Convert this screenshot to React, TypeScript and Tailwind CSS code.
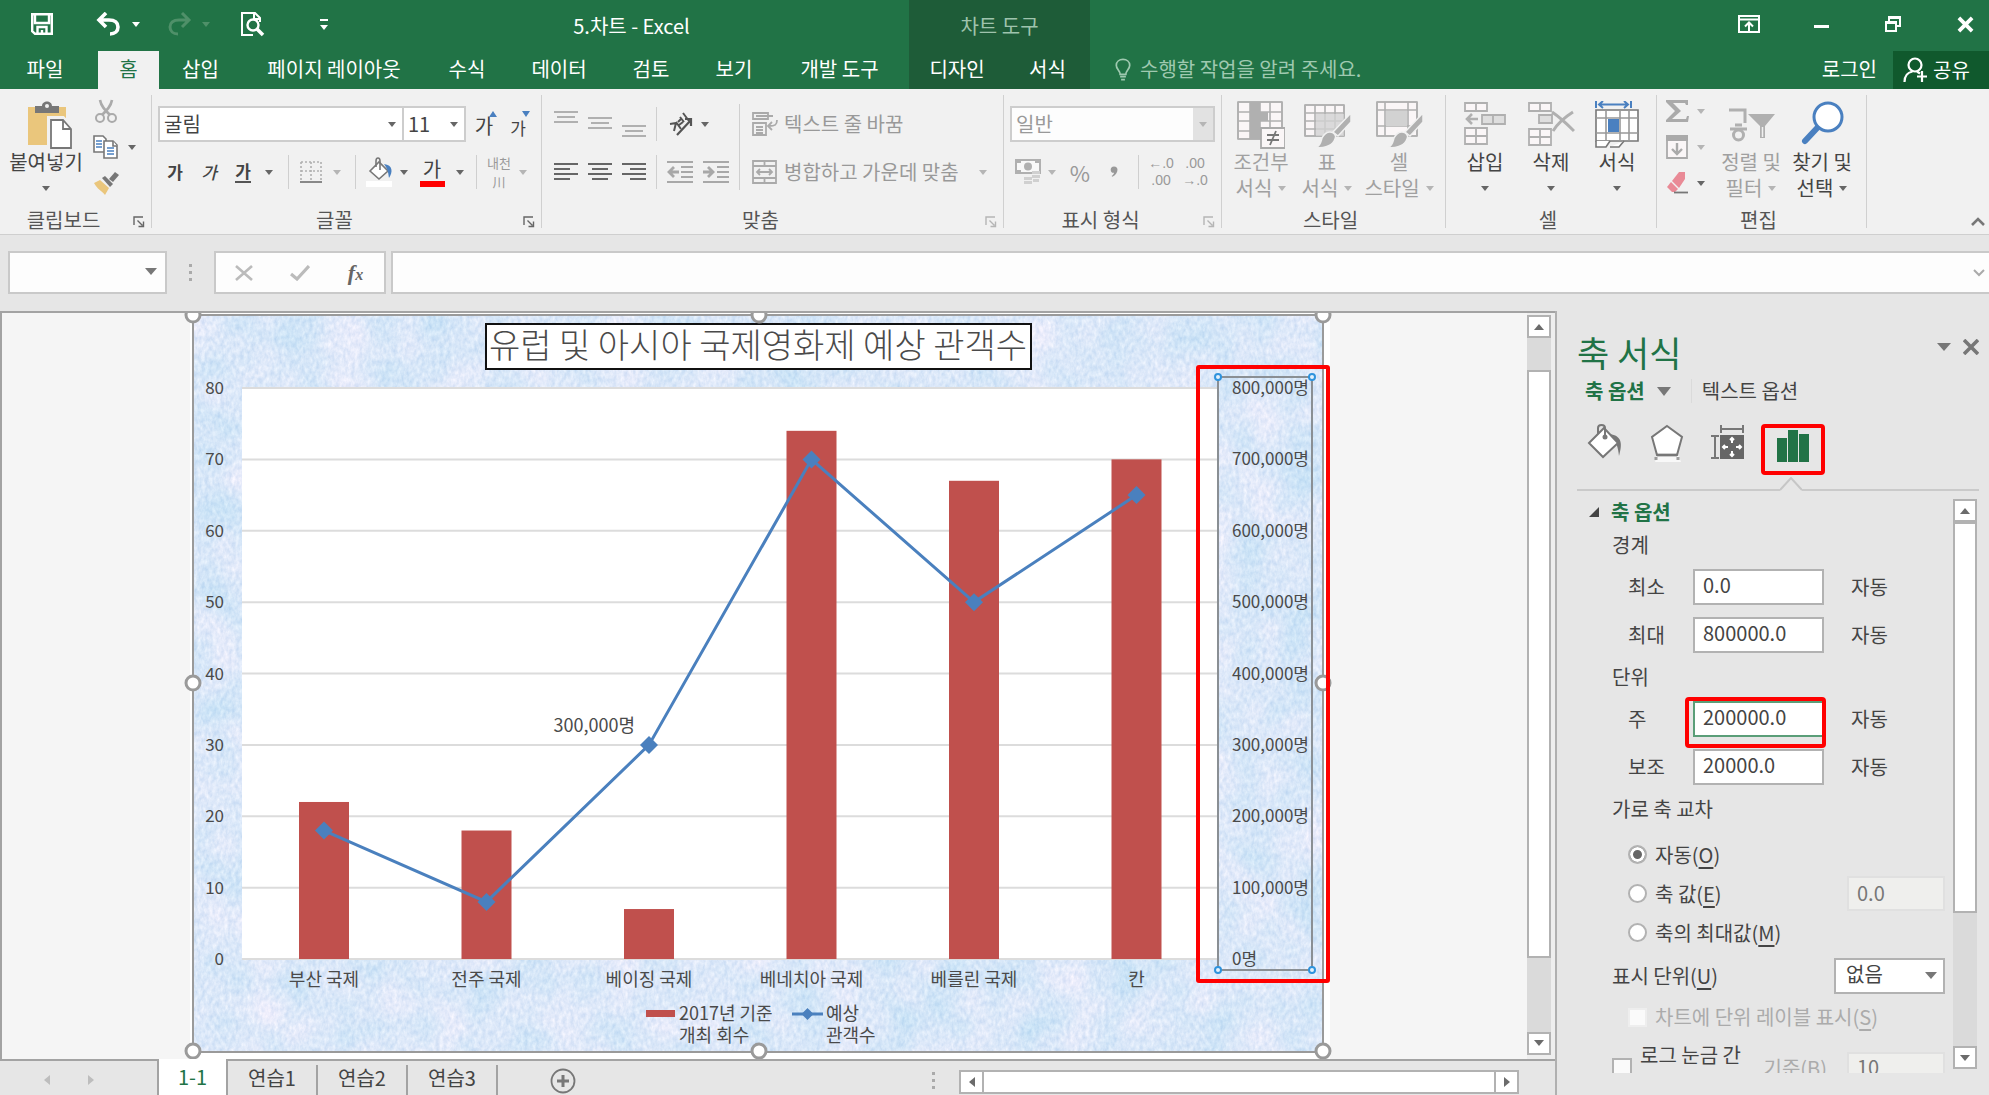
import { useState } from "react";
import type { ReactNode } from "react";

const tabs = [
  { label: "파일", className: "w-[98px] pr-2 text-white" },
  { label: "홈", className: "w-[61px] bg-[#f1f1f1] text-[#217346]" },
  { label: "삽입", className: "w-[83px] text-white" },
  { label: "페이지 레이아웃", className: "w-[184px] text-white" },
  { label: "수식", className: "w-[82px] text-white" },
  { label: "데이터", className: "w-[102px] text-white" },
  { label: "검토", className: "w-[82px] text-white" },
  { label: "보기", className: "w-[84px] text-white" },
  { label: "개발 도구", className: "w-[133px] pr-1.5 text-white" },
  { label: "디자인", className: "w-[96px] bg-[#1e5c38] text-white" },
  { label: "서식", className: "w-[85px] bg-[#1e5c38] text-white" },
];

const series = [
  { name: "부산 국제", count: 22, audience: 18 },
  { name: "전주 국제", count: 18, audience: 8 },
  { name: "베이징 국제", count: 7, audience: 30 },
  { name: "베네치아 국제", count: 74, audience: 70 },
  { name: "베를린 국제", count: 67, audience: 50 },
  { name: "칸", count: 70, audience: 65 },
];

const ticks = [0, 10, 20, 30, 40, 50, 60, 70, 80];

function Caret({ className = "text-[#666]" }: { className?: string }) {
  return (
    <svg viewBox="0 0 8 5" className={`h-[5px] w-2 shrink-0 ${className}`} aria-hidden="true">
      <path d="M0 0h8L4 5z" fill="currentColor" />
    </svg>
  );
}

function VLine({ className = "h-[34px]" }: { className?: string }) {
  return <span className={`w-px shrink-0 bg-[#cfcfcf] ${className}`} />;
}

function IconButton({ label, className = "", children }: { label: string; className?: string; children: ReactNode }) {
  return (
    <button type="button" aria-label={label} className={`flex shrink-0 items-center justify-center ${className}`}>
      {children}
    </button>
  );
}

function Launcher({ faded = false }: { faded?: boolean }) {
  return (
    <button type="button" aria-label="대화 상자 표시" className={faded ? "mr-1.5 text-[#b5b5b5]" : "mr-1.5 text-[#666]"}>
      <svg viewBox="0 0 12 12" className="mt-1 size-3" fill="none" stroke="currentColor" strokeWidth="1.4">
        <path d="M1 9V1h9M4.5 4.5l5 5M10.5 5.5v5h-5" />
      </svg>
    </button>
  );
}

type GroupProps = {
  label: string;
  className: string;
  launcher?: "on" | "off";
  children: ReactNode;
};

function Group({ label, className, launcher, children }: GroupProps) {
  return (
    <section aria-label={label} className={`flex shrink-0 ${className}`}>
      <div className="flex min-w-0 flex-1 flex-col">
        <div className="h-[117px]">{children}</div>
        <div className="flex h-[27px] items-center">
          <span className="flex-1 pr-1.5 text-center text-[#555]">{label}</span>
          {launcher ? <Launcher faded={launcher === "off"} /> : null}
        </div>
      </div>
      <span className="my-1.5 w-px bg-[#d0d0d0]" />
    </section>
  );
}

type BigButtonProps = {
  lines: [string, string?];
  className: string;
  muted?: boolean;
  children: ReactNode;
};

function BigButton({ lines, className, muted = false, children }: BigButtonProps) {
  return (
    <button
      type="button"
      className={`flex shrink-0 flex-col items-center whitespace-nowrap pt-3 leading-[26px] ${muted ? "text-[#a0a0a0]" : "text-[#444]"} ${className}`}
    >
      <span className="flex h-12 items-center">{children}</span>
      <span>{lines[0]}</span>
      <span className="flex h-[26px] items-center gap-1.5">
        {lines[1]}
        <Caret className={muted ? "text-[#b5b5b5]" : "text-[#666]"} />
      </span>
    </button>
  );
}

function Lines({ rows, muted = false }: { rows: [number, number, number][]; muted?: boolean }) {
  return (
    <svg viewBox="0 0 24 26" className="h-[26px] w-6" stroke={muted ? "#b0b0b0" : "#666"} strokeWidth="2">
      {rows.map(([x1, x2, y]) => (
        <path key={y} d={`M${x1} ${y}H${x2}`} />
      ))}
    </svg>
  );
}

function GridIcon({ cols, rows }: { cols: number[]; rows: number[] }) {
  const right = cols[cols.length - 1];
  const bottom = rows[rows.length - 1];
  return (
    <g fill="none" stroke="#b0b0b0" strokeWidth="1.6">
      <path d={`M${cols[0]} ${rows[0]}H${right}V${bottom}H${cols[0]}Z`} fill="#faf6f7" />
      <path d={cols.map((x) => `M${x} ${rows[0]}V${bottom}`).join("")} />
      <path d={rows.map((y) => `M${cols[0]} ${y}H${right}`).join("")} />
    </g>
  );
}

function BrushOverlay() {
  return (
    <g stroke="#f1f1f1" strokeWidth="1.5" fill="#b0b0b0">
      <path d="M48 12v9L35 35l-5-4z" />
      <path d="M27 31c4 0 7 4 5 7-2 6-9 9-19 9 5-3 5-7 6-10 2-4 4-6 8-6z" />
    </g>
  );
}

function TitleBar() {
  return (
    <div className="flex h-[51px]">
      <div className="flex w-[354px] shrink-0 items-start pl-7 pt-2">
        <IconButton label="저장" className="h-8 w-7">
          <svg viewBox="0 0 24 24" className="size-6" fill="none" stroke="#fff" strokeWidth="2.4">
            <path d="M2.2 2.2h19.6v19.6H5l-2.8-2.6zM5 3v8h14V3M7.500 21v-6h9v6M12 18v3" />
          </svg>
        </IconButton>
        <IconButton label="실행 취소" className="ml-9 h-8 w-8">
          <svg viewBox="0 0 26 24" className="h-6 w-[26px]" fill="none" stroke="#fff" strokeWidth="3.6">
            <path d="M11 1 4 8l7 7M4 8h10c6 0 9 3 9 7s-3 7-8 7" />
          </svg>
        </IconButton>
        <IconButton label="실행 취소 목록" className="h-8 w-6">
          <Caret className="text-white" />
        </IconButton>
        <IconButton label="다시 실행" className="ml-4 h-8 w-8">
          <svg viewBox="0 0 26 24" className="h-6 w-[26px]" fill="none" stroke="#4f9069" strokeWidth="3">
            <path d="m15 1 7 7-7 7M22 8H12c-6 0-9 3-9 7s3 7 8 7" />
          </svg>
        </IconButton>
        <IconButton label="다시 실행 목록" className="h-8 w-5">
          <Caret className="text-[#4f9069]" />
        </IconButton>
        <IconButton label="인쇄 미리 보기" className="ml-5 h-8 w-8">
          <svg viewBox="0 0 26 26" className="size-[26px]" fill="none" stroke="#fff" strokeWidth="2">
            <path d="M21 11V7l-5-5H3v22h11M15 2v6h6" />
            <circle cx="14" cy="14" r="5.500" strokeWidth="2.400" />
            <path d="m18 18 6 6" strokeWidth="3.600" />
          </svg>
        </IconButton>
        <IconButton label="빠른 실행 도구 모음 사용자 지정" className="ml-10 h-8 w-8 flex-col gap-1">
          <span className="h-0.5 w-2 bg-white" />
          <Caret className="text-white" />
        </IconButton>
      </div>
      <h1 className="flex w-[555px] shrink-0 items-center justify-center text-white">5.차트 - Excel</h1>
      <div className="flex w-[181px] shrink-0 items-center justify-center bg-[#1e5c38] text-[#9fc3ad]">차트 도구</div>
      <div className="flex flex-1 items-start justify-end gap-10 pr-2 pt-2">
        <IconButton label="리본 메뉴 표시 옵션" className="h-8 w-8">
          <svg viewBox="0 0 22 18" className="h-[18px] w-[22px]" fill="none" stroke="#fff" strokeWidth="2">
            <path d="M1 1h20v16H1zM1 4.500h20M11 16V8M7 11.500 11 7.500l4 4" />
          </svg>
        </IconButton>
        <IconButton label="최소화" className="h-8 w-8 pt-1">
          <span className="h-[3px] w-[15px] bg-white" />
        </IconButton>
        <IconButton label="이전 크기로 복원" className="h-8 w-8">
          <svg viewBox="0 0 18 18" className="size-[18px]" fill="none" stroke="#fff" strokeWidth="2">
            <path d="M5 6V2h11v9h-4M2 7h10v9H2zM2 8h10M5 3h11" />
          </svg>
        </IconButton>
        <IconButton label="닫기" className="h-8 w-8">
          <svg viewBox="0 0 18 18" className="size-[17px]" stroke="#fff" strokeWidth="4">
            <path d="m2 2 14 14M16 2 2 16" />
          </svg>
        </IconButton>
      </div>
    </div>
  );
}

function TabBar() {
  return (
    <nav className="flex h-[38px]">
      {tabs.map((tab) => (
        <button key={tab.label} type="button" className={`flex shrink-0 items-center justify-center whitespace-nowrap pb-0.5 ${tab.className}`}>
          {tab.label}
        </button>
      ))}
      <label className="flex flex-1 items-center pb-0.5 pl-6 text-[#9fc9b0]">
        <svg viewBox="0 0 18 24" className="h-[23px] w-[18px]" fill="none" stroke="currentColor" strokeWidth="1.800">
          <path d="M6 17c0-4-4-5-4-9.500C2 4 5 1.500 9 1.500S16 4 16 7.500c0 4.500-4 5.500-4 9.500zM6 19.500h6M7 22.500h4" />
        </svg>
        <input
          aria-label="수행할 작업"
          placeholder="수행할 작업을 알려 주세요."
          className="ml-2 w-64 bg-transparent outline-none placeholder:text-[#9fc9b0] placeholder:opacity-100"
        />
      </label>
      <button type="button" className="px-4 pb-0.5 text-white">
        로그인
      </button>
      <button type="button" className="flex w-24 items-center gap-1 bg-[#10592d] pl-2.5 text-white">
        <svg viewBox="0 0 26 26" className="h-[26px] w-[26px]" fill="none" stroke="currentColor" strokeWidth="2.200">
          <circle cx="12" cy="8" r="6.500" />
          <path d="M1.500 25c0-6 3-9.500 8-10.500M14 14.500l3 2M19 14v11M14 19.500h10" />
        </svg>
        공유
      </button>
    </nav>
  );
}

function ClipboardGroup() {
  return (
    <Group label="클립보드" className="w-[152px]" launcher="on">
      <div className="flex">
        <BigButton lines={["붙여넣기"]} className="w-[92px]">
          <svg viewBox="0 0 46 48" className="ml-2 h-12 w-[46px]">
            <path d="M1 6h38v38H1z" fill="#eac67c" />
            <path d="M8 12V5h7c0-6 10-6 10 0h7v7z" fill="#777" />
            <circle cx="20" cy="5" r="2" fill="#f1f1f1" />
            <path d="M22 17h14l9 9v21H22z" fill="#fff" stroke="#f1f1f1" strokeWidth="4" />
            <path d="M24 19h12l8 9v19H24zM36 19v9h8" fill="#fff" stroke="#777" strokeWidth="1.800" />
          </svg>
        </BigButton>
        <div className="flex flex-col gap-3 pt-2.5">
          <IconButton label="잘라내기" className="h-6 w-7">
            <svg viewBox="0 0 24 24" className="size-6" fill="none" stroke="#aaa" strokeWidth="2">
              <path d="M6 1c1 6 5 10 10 15M18 1c-1 6-5 10-10 15" strokeWidth="2.600" />
              <circle cx="6" cy="19" r="4" />
              <circle cx="18" cy="19" r="4" />
            </svg>
          </IconButton>
          <div className="flex items-center gap-1.5">
            <IconButton label="복사" className="h-6 w-7">
              <svg viewBox="0 0 26 24" className="h-6 w-[26px]" fill="#fff" stroke="#777" strokeWidth="1.600">
                <path d="M1 1h9l3 3v13H1z" />
                <path d="M11 6h9l4 4v13H11z" />
                <path d="M20 6v5h4" />
                <path d="M3 6h6M3 9h6M3 12h6M14 13h7M14 16h7M14 19h7" stroke="#4a80c0" />
              </svg>
            </IconButton>
            <IconButton label="복사 옵션" className="h-6 w-3">
              <Caret />
            </IconButton>
          </div>
          <IconButton label="서식 복사" className="h-6 w-7">
            <svg viewBox="0 0 26 24" className="h-6 w-[26px]">
              <path d="m1 12 6-3 9 8-4 7C9 20 4 18 1 12z" fill="#eac67c" />
              <path d="m9 7 3-2 8 8-3 3z" fill="#777" />
              <path d="m16 8 6-7 4 3-6 7z" fill="#777" />
            </svg>
          </IconButton>
        </div>
      </div>
    </Group>
  );
}

function FontGroup() {
  return (
    <Group label="글꼴" className="w-[390px]" launcher="on">
      <div className="flex flex-col gap-3 pl-1.5 pt-[17px] text-[#444]">
        <div className="flex h-9">
          <div className="relative">
            <select aria-label="글꼴" className="h-9 w-[246px] appearance-none border-2 border-[#cdcdcd] bg-white pl-1">
              <option>굴림</option>
            </select>
            <Caret className="pointer-events-none absolute right-2 top-4 text-[#666]" />
          </div>
          <div className="relative -ml-0.5">
            <select aria-label="글꼴 크기" className="h-9 w-16 appearance-none border-2 border-[#cdcdcd] bg-white pl-1">
              <option>11</option>
            </select>
            <Caret className="pointer-events-none absolute right-2 top-4 text-[#666]" />
          </div>
          <IconButton label="글꼴 크기 크게" className="ml-1.5 w-7">
            <span className="mt-1 text-[20px]">가</span>
            <svg viewBox="0 0 8 6" className="-ml-1 mb-5 h-1.5 w-2">
              <path d="M0 6h8L4 0z" fill="#4a80c0" />
            </svg>
          </IconButton>
          <IconButton label="글꼴 크기 작게" className="ml-1.5 w-7">
            <span className="mt-2 text-[17px]">가</span>
            <svg viewBox="0 0 8 6" className="-ml-1 mb-5 h-1.5 w-2">
              <path d="M0 0h8L4 6z" fill="#4a80c0" />
            </svg>
          </IconButton>
        </div>
        <div className="flex h-9 items-center text-[17px]">
          <IconButton label="굵게" className="w-[34px] font-bold">가</IconButton>
          <IconButton label="기울임꼴" className="w-[34px] font-medium italic">가</IconButton>
          <IconButton label="밑줄" className="w-[34px] font-bold">
            <span className="border-b-2 border-[#555] leading-5">가</span>
          </IconButton>
          <IconButton label="밑줄 옵션" className="w-[18px]">
            <Caret />
          </IconButton>
          <VLine className="ml-2.5 h-[34px]" />
          <IconButton label="테두리" className="ml-2 w-7">
            <svg viewBox="0 0 22 22" className="size-[22px]" fill="none" stroke="#b0b0b0" strokeWidth="1.600">
              <path d="M1 1h20v19M1 1v19M11 1v19M1 10h20" strokeDasharray="2 2" />
              <path d="M0 21h22" stroke="#888" strokeWidth="2" />
            </svg>
          </IconButton>
          <IconButton label="테두리 옵션" className="w-6">
            <Caret className="text-[#b5b5b5]" />
          </IconButton>
          <VLine className="ml-1.5 h-[34px]" />
          <IconButton label="채우기 색" className="ml-2 w-8">
            <svg viewBox="0 0 28 30" className="h-[30px] w-7">
              <path d="M4 14 13 5l9 9-9 8z" fill="#fff" stroke="#777" strokeWidth="1.600" />
              <path d="M10 10V4c0-4 4-4 4 0v9" fill="none" stroke="#777" strokeWidth="1.600" />
              <path d="M18 7c9 1 9 8 5 14-1-4 0-7-5-14z" fill="#4a80c0" />
              <path d="M0 24h26v6H0z" fill="#fff" />
            </svg>
          </IconButton>
          <IconButton label="채우기 색 옵션" className="w-4">
            <Caret />
          </IconButton>
          <IconButton label="글꼴 색" className="ml-1 w-8 flex-col">
            <span className="text-[20px] leading-6">가</span>
            <span className="h-1.5 w-[25px] bg-[#f00]" />
          </IconButton>
          <IconButton label="글꼴 색 옵션" className="ml-1 w-4">
            <Caret />
          </IconButton>
          <VLine className="ml-2 h-[34px]" />
          <IconButton label="윗주 필드" className="ml-2.5 flex-col text-[13px] leading-[19px] text-[#999]">
            <span>내천</span>
            <span>川</span>
          </IconButton>
          <IconButton label="윗주 옵션" className="w-6">
            <Caret className="text-[#b5b5b5]" />
          </IconButton>
        </div>
      </div>
    </Group>
  );
}

function AlignGroup() {
  return (
    <Group label="맞춤" className="w-[462px]" launcher="off">
      <div className="flex pt-[15px]">
        <div className="flex flex-col gap-3 pl-3 pt-0.5">
          <div className="flex h-9 items-center gap-2.5">
            <IconButton label="위쪽 맞춤"><Lines muted rows={[[0, 24, 1], [3, 21, 6], [0, 24, 11]]} /></IconButton>
            <IconButton label="가운데 맞춤"><Lines muted rows={[[0, 24, 7], [3, 21, 12], [0, 24, 17]]} /></IconButton>
            <IconButton label="아래쪽 맞춤"><Lines muted rows={[[0, 24, 15], [3, 21, 20], [0, 24, 25]]} /></IconButton>
            <VLine />
            <IconButton label="방향">
              <svg viewBox="0 0 28 26" className="h-[26px] w-7" fill="none" stroke="#555" strokeWidth="2.200">
                <path d="m10 24 14-15M24 15V8h-6" />
                <path d="m3 13 6-1-2 8M9 11l5 7M12 14l4-3M13 6l4 5M16 2l6 8M14 8l-3 3" strokeWidth="2" />
              </svg>
            </IconButton>
            <Caret className="-ml-1 text-[#666]" />
          </div>
          <div className="flex h-9 items-center gap-2.5">
            <IconButton label="왼쪽 맞춤"><Lines rows={[[0, 24, 5], [0, 16, 10], [0, 24, 15], [0, 16, 20]]} /></IconButton>
            <IconButton label="가운데"><Lines rows={[[0, 24, 5], [4, 20, 10], [0, 24, 15], [4, 20, 20]]} /></IconButton>
            <IconButton label="오른쪽 맞춤"><Lines rows={[[0, 24, 5], [8, 24, 10], [0, 24, 15], [8, 24, 20]]} /></IconButton>
            <VLine />
            <IconButton label="내어쓰기">
              <svg viewBox="0 0 26 24" className="h-6 w-[26px]" fill="none" stroke="#a8a8a8" strokeWidth="2">
                <path d="M0 2h26M14 7h12M14 12h12M14 17h12M0 22h26" />
                <path d="M12 12H2M7 7l-5 5 5 5" strokeWidth="2.800" />
              </svg>
            </IconButton>
            <IconButton label="들여쓰기">
              <svg viewBox="0 0 26 24" className="h-6 w-[26px]" fill="none" stroke="#a8a8a8" strokeWidth="2">
                <path d="M0 2h26M14 7h12M14 12h12M14 17h12M0 22h26" />
                <path d="M0 12h10M5 7l5 5-5 5" strokeWidth="2.800" />
              </svg>
            </IconButton>
          </div>
        </div>
        <VLine className="ml-2.5 h-[86px]" />
        <div className="flex flex-col gap-3 pl-3 pt-0.5 text-[#999]">
          <button type="button" className="flex h-9 items-center gap-1.5 whitespace-nowrap">
            <svg viewBox="0 0 26 24" className="h-6 w-[26px]" fill="none" stroke="#aaa" strokeWidth="1.800">
              <path d="M1 1h15v6H1zM1 11h13v12H1zM4 4h17M4 15h7M4 18h7M4 21h7M25 8c0 5-2 6-8 6M20 10l-4 4 4 4" />
            </svg>
            텍스트 줄 바꿈
          </button>
          <button type="button" className="flex h-9 items-center whitespace-nowrap">
            <svg viewBox="0 0 26 24" className="mr-1.5 h-6 w-[26px]" fill="none" stroke="#aaa" strokeWidth="1.800">
              <path d="M1 1h23v22H1zM1 6h23M1 18h23M12.500 1v5M12.500 18v5M5 12h15M8 9l-3 3 3 3M17 9l3 3-3 3" />
            </svg>
            병합하고 가운데 맞춤
            <Caret className="ml-5 text-[#b5b5b5]" />
          </button>
        </div>
      </div>
    </Group>
  );
}

function NumberGroup() {
  return (
    <Group label="표시 형식" className="w-[218px]" launcher="off">
      <div className="flex flex-col gap-3 px-1.5 pt-[17px] text-[#999]">
        <div className="relative h-9">
          <select aria-label="표시 형식" className="size-full appearance-none border-2 border-[#cdcdcd] bg-[#fdfdfd] pl-1">
            <option>일반</option>
          </select>
          <span className="pointer-events-none absolute inset-y-0.5 right-0.5 flex w-5 items-center justify-center bg-[#e2e2e2]">
            <Caret className="text-[#b5b5b5]" />
          </span>
        </div>
        <div className="flex h-9 items-center">
          <IconButton label="회계 표시 형식" className="ml-1 w-7">
            <svg viewBox="0 0 26 26" className="size-[26px]">
              <path d="M1 1h24v13H1z" fill="#f8f8f8" stroke="#b0b0b0" strokeWidth="2" />
              <circle cx="13" cy="7.500" r="4" fill="#b0b0b0" />
              <path d="M0 0h6v4H0zM20 0h6v4h-6zM0 11h6v4H0z" fill="#b0b0b0" />
              <path d="M17 12h8v3h-8zM17 16h8v3h-8zM9 18h8v3H9zM9 22h8v3H9zM18 20h6v3h-6z" fill="#d0d0d0" />
            </svg>
          </IconButton>
          <IconButton label="회계 옵션" className="w-5">
            <Caret className="text-[#b5b5b5]" />
          </IconButton>
          <IconButton label="백분율 스타일" className="w-9 text-[22px]">%</IconButton>
          <IconButton label="쉼표 스타일" className="w-8">
            <svg viewBox="0 0 10 14" className="h-3 w-2">
              <path d="M5 0c7 0 5 10-2 13l-1-1c2-1 3-3 3-4-5 1-6-8 0-8z" fill="#999" />
            </svg>
          </IconButton>
          <VLine className="ml-2 h-[34px]" />
          <IconButton label="자릿수 늘림" className="ml-2 w-7 flex-col font-['Liberation_Sans',sans-serif] text-[14px] leading-[17px]">
            <span>←.0</span>
            <span>.00</span>
          </IconButton>
          <IconButton label="자릿수 줄임" className="ml-1.5 w-7 flex-col font-['Liberation_Sans',sans-serif] text-[14px] leading-[17px]">
            <span>.00</span>
            <span>→.0</span>
          </IconButton>
        </div>
      </div>
    </Group>
  );
}

function StyleGroup() {
  return (
    <Group label="스타일" className="w-[224px]">
      <div className="flex pl-1.5">
        <BigButton lines={["조건부", "서식"]} className="w-[66px]" muted>
          <svg viewBox="0 0 48 48" className="size-12">
            <GridIcon cols={[1, 13, 23, 33, 45]} rows={[1, 11, 20, 30, 38]} />
            <path d="M13 1h10v37H13zM23 11h8v9h-8z" fill="#b0b0b0" />
            <path d="M24 27h24v20H24z" fill="#faf6f7" stroke="#aaa" strokeWidth="1.800" />
            <path d="M30 34h12M30 39h12M39 30l-6 14" stroke="#777" strokeWidth="1.800" />
          </svg>
        </BigButton>
        <BigButton lines={["표", "서식"]} className="w-[66px]" muted>
          <svg viewBox="0 0 48 48" className="size-12">
            <GridIcon cols={[2, 12, 22, 32, 41]} rows={[4, 12, 20, 28, 35]} />
            <path d="M13 13h28v22H13z" fill="#d2d2d2" fillOpacity="0.800" />
            <BrushOverlay />
          </svg>
        </BigButton>
        <BigButton lines={["셀", "스타일"]} className="w-[78px]" muted>
          <svg viewBox="0 0 48 48" className="size-12">
            <GridIcon cols={[2, 10, 33, 42]} rows={[1, 9, 25, 35]} />
            <path d="M11 10h21v15H11z" fill="#d2d2d2" />
            <BrushOverlay />
          </svg>
        </BigButton>
      </div>
    </Group>
  );
}

function CellGroup() {
  return (
    <Group label="셀" className="w-[211px]">
      <div className="flex pl-1.5">
        <BigButton lines={["삽입"]} className="w-[66px]">
          <svg viewBox="0 0 48 48" className="size-12" fill="#faf6f7" stroke="#b0b0b0" strokeWidth="1.800">
            <path d="M4 2h22v8H4zM15 2v8M4 27h22v16H4zM15 27v16M4 35h22" />
            <path d="M21 14h23v9H21zM32 14v9" fill="#dedede" />
            <path d="M17 18H6M11 13l-5 5 5 5" fill="none" strokeWidth="2.600" />
          </svg>
        </BigButton>
        <BigButton lines={["삭제"]} className="w-[66px]">
          <svg viewBox="0 0 48 48" className="size-12" fill="#faf6f7" stroke="#b0b0b0" strokeWidth="1.800">
            <path d="M2 2h22v8H2zM13 2v8M2 28h22v16H2zM13 28v16M2 36h22" />
            <path d="M12 14h13v8H12z" fill="#dedede" />
            <path d="M25 11c6 4 13 10 22 19M46 11C38 16 31 22 26 30" fill="none" strokeWidth="3" />
          </svg>
        </BigButton>
        <BigButton lines={["서식"]} className="w-[66px]">
          <svg viewBox="0 0 46 48" className="h-12 w-[46px]" fill="#fff" stroke="#777" strokeWidth="1.600">
            <path d="M2 9h42v31H2z" />
            <path d="M2 17h42M2 32h42M12 9v31M26 9v31M35 9v31" stroke="#999" />
            <path d="M14 18h11v13H14z" fill="#4a80c0" stroke="none" />
            <path d="M2 40v6h10l4-6M16 46h9l5-6" />
            <path d="M2 0v7M37 0v7M5 3.500h29M9 0 5 3.500 9 7M30 0l4 3.500L30 7" fill="none" stroke="#4a80c0" strokeWidth="2" />
          </svg>
        </BigButton>
      </div>
    </Group>
  );
}

function EditGroup() {
  return (
    <Group label="편집" className="w-[210px]">
      <div className="flex pl-2">
        <div className="flex w-12 shrink-0 flex-col gap-3 pt-2.5">
          <button type="button" aria-label="합계" className="flex h-6 items-center gap-2">
            <svg viewBox="0 0 24 24" className="size-6">
              <path d="M1 1h22v5h-2l-1-2H8l8 8-9 8h14l1-3h2l-1 6H1v-2l9-9-9-9z" fill="#aaa" />
            </svg>
            <Caret className="text-[#b5b5b5]" />
          </button>
          <button type="button" aria-label="채우기" className="flex h-6 items-center gap-2">
            <svg viewBox="0 0 24 24" className="size-6" fill="#faf6f7" stroke="#aaa" strokeWidth="1.800">
              <path d="M2 1h20v22H2z" />
              <path d="M2 1h20v4H2z" fill="#aaa" />
              <path d="M12 8v11M7 14l5 5 5-5" fill="none" strokeWidth="2.400" />
            </svg>
            <Caret className="text-[#b5b5b5]" />
          </button>
          <button type="button" aria-label="지우기" className="flex h-6 items-center gap-2">
            <svg viewBox="0 0 24 24" className="size-6">
              <path d="M14 1h6v7l-6 9-7-7z" fill="#e98a96" />
              <path d="m6 11 7 7-3 3H7l-5-5z" fill="#e98a96" />
              <path d="M9 21.500h14" stroke="#777" strokeWidth="1.800" />
            </svg>
            <Caret />
          </button>
        </div>
        <BigButton lines={["정렬 및", "필터"]} className="w-[76px]" muted>
          <svg viewBox="0 0 48 48" className="size-12" fill="none" stroke="#b0b0b0" strokeWidth="3">
            <path d="M2 9h16v13M3 28h17M8 24h7" />
            <circle cx="11.500" cy="34" r="5" />
            <path d="M21 13h27L38 25v12h-5V25z" fill="#b0b0b0" stroke="none" />
            <path d="M35.500 26v10" stroke="#f1f1f1" strokeWidth="1.500" />
          </svg>
        </BigButton>
        <BigButton lines={["찾기 및", "선택"]} className="w-[66px]">
          <svg viewBox="0 0 48 48" className="size-12">
            <path d="m7 40 14-15" stroke="#4a80c0" strokeWidth="6" strokeLinecap="round" />
            <circle cx="30" cy="16" r="14" fill="#fff" stroke="#4a80c0" strokeWidth="3" />
          </svg>
        </BigButton>
      </div>
    </Group>
  );
}

function Ribbon() {
  return (
    <div className="flex h-[146px] border-b border-[#cfcfcf] bg-[#f1f1f1]">
      <ClipboardGroup />
      <FontGroup />
      <AlignGroup />
      <NumberGroup />
      <StyleGroup />
      <CellGroup />
      <EditGroup />
      <div className="flex flex-1 items-end justify-end pb-2 pr-1">
        <IconButton label="리본 메뉴 축소">
          <svg viewBox="0 0 14 10" className="h-2.5 w-3.5" fill="none" stroke="#777" strokeWidth="2.600">
            <path d="m1 9 6-6 6 6" />
          </svg>
        </IconButton>
      </div>
    </div>
  );
}

function FormulaBar() {
  return (
    <div className="flex h-[76px] items-start pl-2 pt-4">
      <div className="relative">
        <input aria-label="이름 상자" className="h-[43px] w-[159px] border-2 border-[#c9c9c9] bg-[#fdfdfd] px-2" />
        <svg viewBox="0 0 12 7" className="pointer-events-none absolute right-2.5 top-[17px] h-[7px] w-3">
          <path d="M0 0h12L6 7z" fill="#777" />
        </svg>
      </div>
      <span className="flex h-[43px] w-[47px] flex-col items-center justify-center gap-1">
        <i className="size-[3px] bg-[#aaa]" />
        <i className="size-[3px] bg-[#aaa]" />
        <i className="size-[3px] bg-[#aaa]" />
      </span>
      <div className="flex h-[43px] w-[172px] shrink-0 items-center justify-around border-2 border-[#c9c9c9] bg-[#fdfdfd] pr-0.5">
        <IconButton label="취소">
          <svg viewBox="0 0 18 16" className="h-4 w-[18px]" stroke="#bbb" strokeWidth="2.600">
            <path d="m1 1 16 14M17 1 1 15" />
          </svg>
        </IconButton>
        <IconButton label="입력">
          <svg viewBox="0 0 20 16" className="h-4 w-5" fill="none" stroke="#bbb" strokeWidth="3.200">
            <path d="m1 9 6 5L19 1" />
          </svg>
        </IconButton>
        <button type="button" className="font-['Liberation_Serif',serif] text-[22px] font-bold italic leading-none text-[#666]">
          f<span className="text-[16px]">x</span>
        </button>
      </div>
      <div className="relative ml-[5px] flex-1">
        <input aria-label="수식 입력줄" className="h-[43px] w-full border-2 border-r-0 border-[#c9c9c9] bg-[#fdfdfd] px-2" />
        <svg viewBox="0 0 12 8" className="pointer-events-none absolute right-1 top-[18px] h-2 w-3" fill="none" stroke="#aaa" strokeWidth="2">
          <path d="m1 1 5 5 5-5" />
        </svg>
      </div>
    </div>
  );
}

// Origin of the drawing is the top left corner of the white sheet.
const plot = { left: 52, top: 75, right: 1028, bottom: 646 };
const step = 162.5;
const centerOf = (index: number) => plot.left + 82 + index * step;
const yOf = (value: number) => plot.bottom - (value * (plot.bottom - plot.top)) / 80;

function Diamond({ x, y, r = 9 }: { x: number; y: number; r?: number }) {
  return <path d={`M${x} ${y - r}l${r} ${r}l${-r} ${r}l${-r} ${-r}z`} fill="#4a80be" />;
}

function Chart() {
  const line = series.map((item, i) => `${centerOf(i)},${yOf(item.audience)}`).join(" ");
  return (
    <svg
      viewBox="0 0 1140 746"
      role="img"
      aria-label="유럽 및 아시아 국제영화제 예상 관객수"
      className="h-full max-w-full overflow-visible font-['Noto_Sans_CJK_KR',sans-serif]"
      fill="#4a4a4a"
    >
      <defs>
        <filter id="tissue" x="0" y="0" width="100%" height="100%" colorInterpolationFilters="sRGB">
          <feTurbulence type="fractalNoise" baseFrequency="0.022" numOctaves="2" seed="4" result="cloud" />
          <feColorMatrix in="cloud" values="0.2 0 0 0 0.755  0.06 0 0 0 0.878  0.03 0 0 0 0.960  0 0 0 0 1" result="tone" />
          <feTurbulence type="fractalNoise" baseFrequency="0.26 0.17" numOctaves="3" seed="9" result="fiber" />
          <feColorMatrix in="fiber" values="0.42 0 0 0 0.290  0.28 0 0 0 0.360  0.12 0 0 0 0.440  0 0 0 0 1" result="grain" />
          <feComposite in="tone" in2="grain" operator="arithmetic" k1="0" k2="1" k3="0.5" k4="-0.250" />
        </filter>
      </defs>
      <rect width="1140" height="746" fill="#fff" />
      <rect x="4" y="3" width="1129" height="736" fill="#d8e8f9" />
      <rect x="4" y="3" width="1129" height="736" filter="url(#tissue)" />
      <rect x="3" y="2" width="1130" height="737" fill="none" stroke="#9a9a9a" strokeWidth="2" />

      <rect x="296" y="11" width="545" height="45" fill="#fff" stroke="#111" strokeWidth="2" />
      <text x="568" y="45" fontSize="34" fontWeight="300" textAnchor="middle">
        유럽 및 아시아 국제영화제 예상 관객수
      </text>

      <rect x={plot.left} y={plot.top} width={plot.right - plot.left} height={plot.bottom - plot.top} fill="#fff" />
      {ticks.map((tick) => (
        <g key={tick} fontSize="17">
          <path d={`M${plot.left} ${yOf(tick)}H${plot.right}`} stroke="#dcdcdc" strokeWidth="2" />
          <text x="34" y={yOf(tick) + 6} textAnchor="end">
            {tick}
          </text>
          <text x="1042" y={yOf(tick) + 6}>
            {`${(tick * 10000).toLocaleString("en-US")}명`}
          </text>
        </g>
      ))}
      {series.map((item, i) => (
        <g key={item.name}>
          <rect x={centerOf(i) - 25} y={yOf(item.count)} width="50" height={plot.bottom - yOf(item.count)} fill="#c0504d" />
          <text x={centerOf(i)} y="673" fontSize="18" textAnchor="middle">
            {item.name}
          </text>
        </g>
      ))}
      <polyline points={line} fill="none" stroke="#4a80be" strokeWidth="3" />
      {series.map((item, i) => (
        <Diamond key={item.name} x={centerOf(i)} y={yOf(item.audience)} />
      ))}
      <text x="445" y="419" fontSize="18" textAnchor="end">
        300,000명
      </text>

      <rect x="456" y="697" width="29" height="7" fill="#c0504d" />
      <path d="M602 701h31" stroke="#4a80be" strokeWidth="3" />
      <Diamond x={617.5} y={701} r={6} />
      <g fontSize="18">
        <text x="489" y="707">2017년 기준</text>
        <text x="489" y="729">개최 회수</text>
        <text x="636" y="707">예상</text>
        <text x="636" y="729">관객수</text>
      </g>

      <g fill="#fff" stroke="#9a9a9a" strokeWidth="3">
        {[3, 569, 1133].map((x) => (
          <g key={x}>
            <circle cx={x} cy="2" r="7" />
            <circle cx={x} cy="738" r="7" />
          </g>
        ))}
        <circle cx="3" cy="370" r="7" />
        <circle cx="1133" cy="370" r="7" />
      </g>

      <rect x="1028" y="64" width="94" height="593" fill="none" stroke="#8a8f94" strokeWidth="2" />
      {[1028, 1122].map((x) => (
        <g key={x} fill="#e4f1fc" stroke="#2f93dd" strokeWidth="2">
          <circle cx={x} cy="64" r="3" />
          <circle cx={x} cy="657" r="3" />
        </g>
      ))}
      <rect x="1008" y="54" width="130" height="614" rx="1" fill="none" stroke="#f00" strokeWidth="4" />
    </svg>
  );
}

function Arrow({ direction, muted = false }: { direction: "up" | "down" | "left" | "right"; muted?: boolean }) {
  const shapes = { up: "M1 9h10L6 3z", down: "M1 3h10L6 9z", left: "M9 1v10L3 6z", right: "M3 1v10l6-5z" };
  return (
    <svg viewBox="0 0 12 12" className="size-3" aria-hidden="true">
      <path d={shapes[direction]} fill={muted ? "#bdbdbd" : "#6b6b6b"} />
    </svg>
  );
}

function VerticalScroll({ thumbClass, restClass, gapClass }: { thumbClass: string; restClass: string; gapClass: string }) {
  const button = "flex h-[23px] shrink-0 items-center justify-center border-2 border-[#b2b2b2] bg-white";
  return (
    <div className="flex w-6 shrink-0 flex-col bg-[#dadada]">
      <button type="button" aria-label="위로 스크롤" className={button}>
        <Arrow direction="up" />
      </button>
      <span className={gapClass} />
      <span className={`border-2 border-[#b2b2b2] bg-white ${thumbClass}`} />
      <span className={restClass} />
      <button type="button" aria-label="아래로 스크롤" className={button}>
        <Arrow direction="down" />
      </button>
    </div>
  );
}

function SheetTabs() {
  return (
    <div className="flex h-9 items-start">
      <div className="flex h-full w-[157px] shrink-0 items-center justify-center gap-8 border-t-2 border-[#a3a3a3] pr-5 pt-1">
        <IconButton label="이전 시트"><Arrow direction="left" muted /></IconButton>
        <IconButton label="다음 시트"><Arrow direction="right" muted /></IconButton>
      </div>
      <button type="button" className="h-full w-[71px] shrink-0 border-x-2 border-[#a3a3a3] bg-white text-[#217346]">
        1-1
      </button>
      <div className="flex h-full flex-1 items-center border-t-2 border-[#a3a3a3]">
        {["연습1", "연습2", "연습3"].map((name) => (
          <button key={name} type="button" className="mt-1 h-[30px] w-[90px] shrink-0 border-r-2 border-[#a3a3a3] pb-1 leading-none text-[#444]">
            {name}
          </button>
        ))}
        <IconButton label="새 시트" className="ml-[52px]">
          <svg viewBox="0 0 26 26" className="mt-1.5 size-[26px]" fill="none" stroke="#777" strokeWidth="1.800">
            <circle cx="13" cy="13" r="11.500" />
            <path d="M13 7v12M7 13h12" strokeWidth="3" />
          </svg>
        </IconButton>
        <span className="ml-auto mr-6 flex flex-col gap-1 pt-1">
          <i className="size-[3px] bg-[#aaa]" />
          <i className="size-[3px] bg-[#aaa]" />
          <i className="size-[3px] bg-[#aaa]" />
        </span>
        <div className="mr-9 mt-2 flex h-6 w-[560px] shrink border-2 border-[#b2b2b2] bg-white">
          <IconButton label="왼쪽으로 스크롤" className="w-[23px] border-r-2 border-[#b2b2b2]"><Arrow direction="left" /></IconButton>
          <span className="flex-1" />
          <IconButton label="오른쪽으로 스크롤" className="w-[23px] border-l-2 border-[#b2b2b2]"><Arrow direction="right" /></IconButton>
        </div>
      </div>
    </div>
  );
}

function ValueRow({ id, label, value, focused = false }: { id: string; label: string; value: string; focused?: boolean }) {
  return (
    <div className="flex h-12 items-center pl-[51px]">
      <label htmlFor={id} className="w-[65px] shrink-0">
        {label}
      </label>
      <div className="relative w-[131px] shrink-0">
        <input
          id={id}
          defaultValue={value}
          className={`h-9 w-full border-2 bg-white pb-1.5 pl-2 outline-none ${focused ? "border-[#5a9e78]" : "border-[#b2b2b2]"}`}
        />
        {focused ? <span className="pointer-events-none absolute -left-2 -right-0.5 -top-1 h-[51px] rounded-sm border-4 border-[#f00]" /> : null}
      </div>
      <span className="ml-[27px]">자동</span>
    </div>
  );
}

function Radio({ label, hotkey, checked, onSelect }: { label: string; hotkey: string; checked: boolean; onSelect: () => void }) {
  return (
    <label className="flex h-[39px] items-center gap-2 pl-[51px]">
      <input
        type="radio"
        name="crosses"
        checked={checked}
        onChange={onSelect}
        className="size-[19px] appearance-none rounded-full border-2 border-[#b2b2b2] bg-white checked:bg-[#666] checked:shadow-[inset_0_0_0_3px_#fff]"
      />
      <span>
        {label}(<u className="underline-offset-4">{hotkey}</u>)
      </span>
    </label>
  );
}

function FormatPane() {
  const [crosses, setCrosses] = useState("O");
  return (
    <aside aria-label="축 서식" className="flex w-[434px] shrink-0 flex-col border-l-2 border-[#b0b0b0] pl-5 pr-2.5 text-[#444]">
      <header className="flex items-start pt-4">
        <h2 className="flex-1 text-[35px] leading-[50px] text-[#217346]">축 서식</h2>
        <div className="flex items-center gap-3 pt-3">
          <IconButton label="작업창 옵션">
            <svg viewBox="0 0 14 8" className="h-2 w-3.5">
              <path d="M0 0h14L7 8z" fill="#777" />
            </svg>
          </IconButton>
          <IconButton label="닫기">
            <svg viewBox="0 0 16 16" className="size-4" stroke="#777" strokeWidth="3.600">
              <path d="m1 1 14 14M15 1 1 15" />
            </svg>
          </IconButton>
        </div>
      </header>
      <div className="flex h-7 items-center pl-2">
        <button type="button" className="flex items-center gap-3 font-bold text-[#217346]">
          축 옵션
          <svg viewBox="0 0 14 9" className="h-[9px] w-3.5">
            <path d="M0 0h14L7 9z" fill="#777" />
          </svg>
        </button>
        <span className="ml-5 h-6 w-px bg-[#dadada]" />
        <button type="button" className="ml-2.5">텍스트 옵션</button>
      </div>
      <div className="flex h-[71px] items-start pl-2.5 pt-[19px]">
        <IconButton label="채우기 및 선">
          <svg viewBox="0 0 38 36" className="h-9 w-[38px]" stroke="#777" strokeWidth="2">
            <path d="M23 10c11 2 13 8 9 22-1-9-2-13-9-22z" fill="#777" stroke="none" />
            <path d="M2 19 17 4l14 15-15 14z" fill="#fff" />
            <path d="M11 10V4c0-4 7-4 7 0v8" fill="none" />
            <circle cx="18" cy="13" r="2.500" fill="#777" stroke="none" />
          </svg>
        </IconButton>
        <IconButton label="효과" className="ml-[23px]">
          <svg viewBox="0 0 38 38" className="h-[38px] w-[38px]" stroke="#777" strokeWidth="2">
            <path d="M9 32h22l2 6H7z" fill="#f8f8f8" stroke="none" />
            <path d="M19 2 34 13l-5 18H9L4 13z" fill="#fff" />
            <path d="M9 31h20M8 33v3M30 33v3" strokeWidth="3" strokeOpacity="0.700" />
          </svg>
        </IconButton>
        <IconButton label="크기 및 속성" className="ml-6">
          <svg viewBox="0 0 36 36" className="size-9" fill="none" stroke="#777" strokeWidth="2">
            <path d="M11 5h22M11 1v8M33 1v8M5 12v22M1 12h8M1 34h8" />
            <path d="M10 11h24v24H10z" fill="#666" stroke="none" />
            <path d="M22 14v18M13 23h18M20 16l2-2 2 2M20 30l2 2 2-2M15 21l-2 2 2 2M29 21l2 2-2 2" stroke="#fff" />
            <path d="M22 19v8M18 23h8" stroke="#666" strokeWidth="4" />
          </svg>
        </IconButton>
        <IconButton label="축 옵션" className="ml-[15px] h-[51px] w-16 rounded-sm border-4 border-[#f00] pb-2.5">
          <svg viewBox="0 0 34 36" className="h-9 w-[34px]" fill="#217346">
            <path d="M1 11h10v24H1zM12 3h10v32H12zM23 7h10v28H23z" />
          </svg>
        </IconButton>
      </div>
      <div className="flex h-[15px] items-end">
        <span className="h-0.5 w-[203px] bg-[#cacaca]" />
        <svg viewBox="0 0 22 14" className="h-3.5 w-[22px]" fill="none" stroke="#c6c6c6" strokeWidth="2">
          <path d="m0 13 11-12 11 12" />
        </svg>
        <span className="h-0.5 flex-1 bg-[#cacaca]" />
      </div>

      <div className="mb-[22px] mt-2 flex min-h-0 flex-1">
        <form className="min-w-0 flex-1 overflow-hidden pr-2">
          <button type="button" className="flex h-[26px] items-center gap-3 pl-3 font-bold text-[#217346]">
            <svg viewBox="0 0 10 10" className="size-2.5">
              <path d="M10 0v10H0z" fill="#444" />
            </svg>
            축 옵션
          </button>
          <h3 className="flex h-[38px] items-center pl-[35px] pt-0.5">경계</h3>
          <ValueRow id="bound-min" label="최소" value="0.0" />
          <ValueRow id="bound-max" label="최대" value="800000.0" />
          <h3 className="flex h-9 items-center pl-[35px]">단위</h3>
          <ValueRow id="unit-major" label="주" value="200000.0" focused />
          <ValueRow id="unit-minor" label="보조" value="20000.0" />
          <h3 className="mb-2 flex h-9 items-center pl-[35px]">가로 축 교차</h3>
          <Radio label="자동" hotkey="O" checked={crosses === "O"} onSelect={() => setCrosses("O")} />
          <div className="flex items-center justify-between">
            <Radio label="축 값" hotkey="E" checked={crosses === "E"} onSelect={() => setCrosses("E")} />
            <input aria-label="축 값" disabled defaultValue="0.0" className="h-[35px] w-[98px] border-2 border-[#e0e0e0] bg-[#efefed] pb-0.5 pl-2 text-[#777]" />
          </div>
          <Radio label="축의 최대값" hotkey="M" checked={crosses === "M"} onSelect={() => setCrosses("M")} />
          <div className="flex h-12 items-center justify-between pl-[35px]">
            <label htmlFor="display-unit">
              표시 단위(<u className="underline-offset-4">U</u>)
            </label>
            <div className="relative">
              <select id="display-unit" className="h-9 w-[111px] appearance-none border-2 border-[#b2b2b2] bg-white pb-1 pl-2.5">
                <option>없음</option>
              </select>
              <svg viewBox="0 0 12 7" className="pointer-events-none absolute right-2 top-3.5 h-[7px] w-3">
                <path d="M0 0h12L6 7z" fill="#777" />
              </svg>
            </div>
          </div>
          <label className="flex h-[34px] items-center gap-2 whitespace-nowrap pl-[51px] text-[#ababab]">
            <input type="checkbox" disabled className="size-[19px] appearance-none border-2 border-[#eee] bg-[#fafafa]" />
            <span>
              차트에 단위 레이블 표시(<u className="underline-offset-4">S</u>)
            </span>
          </label>
          <div className="flex items-start whitespace-nowrap pl-[35px] pt-1.5">
            <label className="flex items-start gap-2">
              <input type="checkbox" className="mt-[18px] size-5 appearance-none border-2 border-[#b2b2b2] bg-[#fafafa]" />
              <span className="leading-[30px]">로그 눈금 간</span>
            </label>
            <label htmlFor="log-base" className="ml-auto pt-3.5 text-[#ababab]">
              기준(<u className="underline-offset-4">B</u>)
            </label>
            <input id="log-base" disabled defaultValue="10" className="ml-5 mt-3 h-[35px] w-[98px] shrink-0 border-2 border-[#e0e0e0] bg-[#efefed] pb-1.5 pl-2 text-[#777]" />
          </div>
        </form>
        <div className="mb-1 mr-0.5 flex">
          <VerticalScroll gapClass="hidden" thumbClass="flex-[390]" restClass="flex-[134]" />
        </div>
      </div>
    </aside>
  );
}

export default function App() {
  return (
    <div className="flex h-screen min-h-[900px] flex-col overflow-hidden bg-[#e6e6e6] font-['Noto_Sans_CJK_KR',sans-serif] text-[20px] leading-7">
      <header className="shrink-0 bg-[#217346]">
        <TitleBar />
        <TabBar />
      </header>
      <Ribbon />
      <FormulaBar />
      <div className="flex min-h-0 flex-1">
        <main className="flex min-w-0 flex-1 flex-col">
          <div className="flex min-h-0 flex-1 border-l-2 border-t-2 border-[#a3a3a3] bg-[#f5f5f5]">
            <div className="flex min-w-0 flex-1 justify-center overflow-hidden pr-2.5">
              <Chart />
            </div>
            <div className="flex bg-[#eee] pb-1 pr-1 pt-0.5">
              <VerticalScroll gapClass="flex-[32]" thumbClass="flex-[587]" restClass="flex-[74]" />
            </div>
          </div>
          <SheetTabs />
        </main>
        <FormatPane />
      </div>
    </div>
  );
}
